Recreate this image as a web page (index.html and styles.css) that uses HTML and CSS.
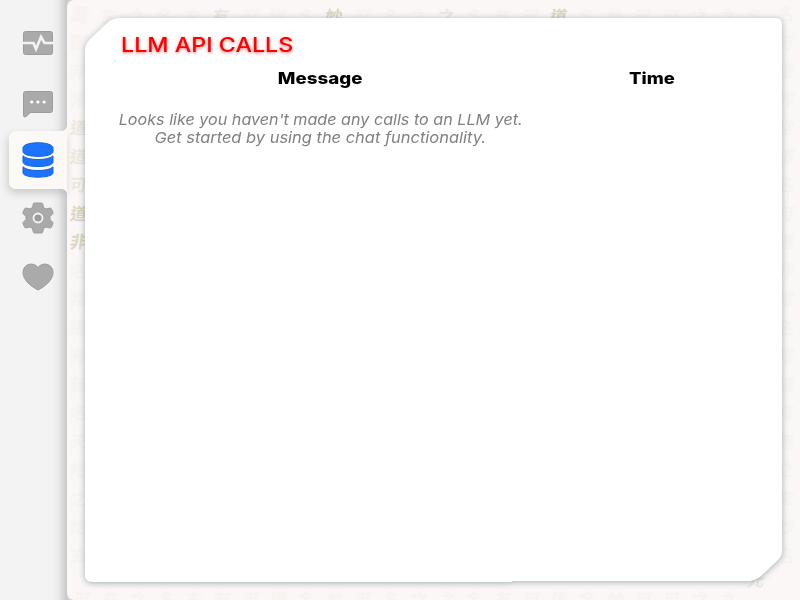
FILE: index.html
```
<!DOCTYPE html>
<html lang="en">
<head>
<meta charset="utf-8">
<title>LLM API Calls</title>
<link rel="stylesheet" href="styles.css">
</head>
<body>
<div class="app">
  <nav class="sidebar">
    <a class="tab"><svg viewBox="0 0 32 26" width="32" height="26"><rect x="1.500" y="1.500" width="29" height="23" rx="2"/><path class="cut" d="M1 13h10.500l2.500 6 5-12 3.500 6h9"/></svg></a>
    <a class="tab chat"><svg viewBox="0 0 32 30" width="32" height="30"><path d="M3.500 2.500h25q2 0 2 2v17q0 2-2 2H8.500L4 27.500q-2.500 1.500-2.500-1V4.500q0-2 2-2z"/><circle class="dot" cx="9.700" cy="13" r="1.600"/><circle class="dot" cx="15.900" cy="13" r="1.600"/><circle class="dot" cx="22.100" cy="13" r="1.600"/></svg></a>
    <a class="tab active"><svg viewBox="0 0 32 36" width="32" height="36"><path d="M1 6C1-1 31-1 31 6v3.500c0 6.500-30 6.500-30 0z"/><path d="M1 13.800c4 5 26 5 30 0v6.200c0 6-30 6-30 0z"/><path d="M1 24.800c4 5 26 5 30 0v6c0 5.800-30 5.800-30 0z"/></svg></a>
    <a class="tab"><svg viewBox="0 0 32 34" width="32" height="34"><path d="M12.500 2h7q1 0 1.200 1l.8 3.500 2.500 1.500 4-1q1 0 1.500 1l1.500 3.500q.3 1-.5 1.500L28 15.500v3l2.500 2.500q.8.800.5 1.500L29.500 26q-.5 1-1.500 1l-4-1-2.500 1.500-.8 3.500q-.2 1-1.200 1h-7q-1 0-1.200-1l-.8-3.500L8 26l-4 1q-1 0-1.500-1L1 22.500Q.7 21.800 1.500 21L4 18.500v-3L1.500 13q-.8-.5-.5-1.500L2.500 8Q3 7 4 7l4 1 2.500-1.500.8-3.500q.2-1 1.200-1z"/><circle class="ring" cx="16" cy="17" r="4.500"/></svg></a>
    <a class="tab heart"><svg viewBox="0 0 32 30" width="32" height="30"><path d="M16 28C10 25 1 18.500 1 10.500 1 1.500 11.500-.5 16 5.500 20.500-.5 31 1.500 31 10.500c0 8-9 14.500-15 17.500z"/></svg></a>
  </nav>
  <main class="stage">
    <div class="script across" aria-hidden="true"><i>可</i><i>玄</i><i>之</i><i>名</i><i>玄</i><i class="mid">有</i><i>可</i><i>道</i><i>名</i><i class="dark">妙</i><i>可</i><i>名</i><i>之</i><i class="mid">之</i><i>名</i><i>有</i><i>可</i><i class="dark">道</i><i>名</i><i>妙</i><i>可</i><i>可</i><i>之</i><i>之</i><i>名</i></div>
    <div class="script down" aria-hidden="true"><i>可</i><i>道</i><i>非</i><i>常</i><i class="mid">道</i><i class="mid">道</i><i class="mid">可</i><i class="dark">道</i><i class="dark">非</i><i>名</i><i>常</i><i>道</i><i>有</i><i>無</i><i>名</i><i>天</i><i>地</i><i>之</i><i>始</i><i>玄</i></div>
    <div class="script down right" aria-hidden="true"><i>名</i><i>可</i><i>道</i><i>非</i><i>常</i><i>道</i><i>名</i><i>可</i><i>道</i><i>非</i><i>常</i><i>名</i><i>常</i><i>道</i><i>有</i><i>無</i><i>之</i><i>玄</i><i>妙</i><i>名</i></div>
    <div class="script across bottom" aria-hidden="true"><i>可</i><i>玄</i><i>之</i><i>名</i><i>玄</i><i>有</i><i>可</i><i>道</i><i>名</i><i>妙</i><i>可</i><i>名</i><i>之</i><i>之</i><i>名</i><i>有</i><i>可</i><i>道</i><i>名</i><i>妙</i><i>可</i><i>可</i><i>之</i><i>之</i><i class="mid raised">光</i></div>
    <section class="panel">
      <h1><span>LLM API CALLS</span></h1>
      <div class="calls">
        <h2><span class="message">Message</span></h2>
        <h2><span class="time">Time</span></h2>
        <p><span class="first">Looks like you haven't made any calls to an LLM yet.</span><br><span class="second">Get started by using the chat functionality.</span></p>
      </div>
    </section>
  </main>
</div>
</body>
</html>
```
FILE: styles.css
```
* { box-sizing: border-box; }
body { margin: 0; width: 800px; height: 600px; overflow: hidden; background: #f3f3f3; font-family: Inter, "Liberation Sans", sans-serif; }
.app { display: flex; height: 600px; background: linear-gradient(to right, #f3f3f3 67px, #d0d0d0 67px); }
.sidebar { width: 67px; display: flex; flex-direction: column; padding: 14px 0 0 9px; position: relative; z-index: 1; background: linear-gradient(to right, transparent 51px, rgba(0,0,0,.03) 58px, rgba(0,0,0,.18)); }
.tab { height: 58px; flex: none; display: flex; align-items: center; justify-content: center; padding-left: 1px; }
.tab svg { fill: #aaa; stroke: #9c9c9c; stroke-width: 1; margin-left: -1px; }
.tab .cut { fill: none; stroke: #f3f3f3; stroke-width: 2.600; }
.tab .dot { fill: #fff; stroke: none; }
.tab .ring { fill: #9c9c9c; stroke: #f5f5f5; stroke-width: 1.800; }
.chat { height: 59px; padding-top: 4px; }
.heart { padding-top: 1px; }
.active { position: relative; background: linear-gradient(to right, #fbfaf6, #fbf8f6); border-radius: 7px 0 0 7px; box-shadow: -1px 4px 8px rgba(0,0,0,.17); }
.active::before, .active::after { content: ""; position: absolute; right: 0; width: 5px; height: 5px; }
.active::before { bottom: 100%; background: radial-gradient(circle at 0 0, transparent 4.500px, #fbf8f6 5px); }
.active::after { top: 100%; background: radial-gradient(circle at 0 100%, transparent 4.500px, #fbf8f6 5px); }
.active svg { fill: #1b73ff; stroke: #1762d8; }
.stage { position: relative; width: 733px; height: 600px; padding: 17px 18px 18px; background: #faf7f6; border-radius: 7px 0 0 7px; overflow: hidden; }
.script { position: absolute; display: flex; color: #f6f3f1; font: bold 17px/28px "Noto Sans CJK TC", sans-serif; }
.script i { width: 28.100px; flex: none; text-align: center; font-style: normal; transform: skewX(-8deg); }
.across { left: 0; top: 2px; }
.down { left: 0; top: -1px; flex-direction: column; }
.down i { height: 28.500px; width: 24px; }
.right { left: 707px; }
.bottom { left: 1px; top: 585px; }
.script .mid { color: #ece7df; }
.script .dark { color: #dcd6c3; }
.script .raised { transform: translateY(-20px) skewX(-8deg); }
.panel { position: relative; height: 565px; padding-top: 17px; filter: drop-shadow(0 1px 3px rgba(60,85,90,.45)); }
.panel::before { content: ""; position: absolute; inset: 0; z-index: -1; background: #fff; clip-path: path("M0 34Q0 27 5 22L22 6Q28 1 35 1H691Q697 1 697 7V534Q697 540 691 545L676 559Q670 564 663 564H427V565H7Q0 565 0 558Z"); }
h1, h2, p { margin: 0; }
h1 span, h2 span, p span { display: inline-block; white-space: nowrap; }
h1 { padding-left: 36px; height: 32px; font-size: 20px; line-height: 22px; font-weight: 500; color: #f00; text-shadow: 0 1px 3px rgba(255,0,0,.55); }
h1 span { transform: scaleX(1.165); transform-origin: left; }
.calls { display: grid; grid-template-columns: 471px 191px; }
h2 { height: 44px; line-height: 24px; font-size: 16px; font-weight: 800; text-align: center; color: #000; }
.message { transform: scaleX(1.170); }
.time { transform: scaleX(1.150); }
p { padding-top: 1px; font-size: 15px; line-height: 18px; text-align: center; color: #808080; font-style: italic; }
.first { transform: scaleX(1.076); }
.second { transform: scaleX(1.096); }
```
